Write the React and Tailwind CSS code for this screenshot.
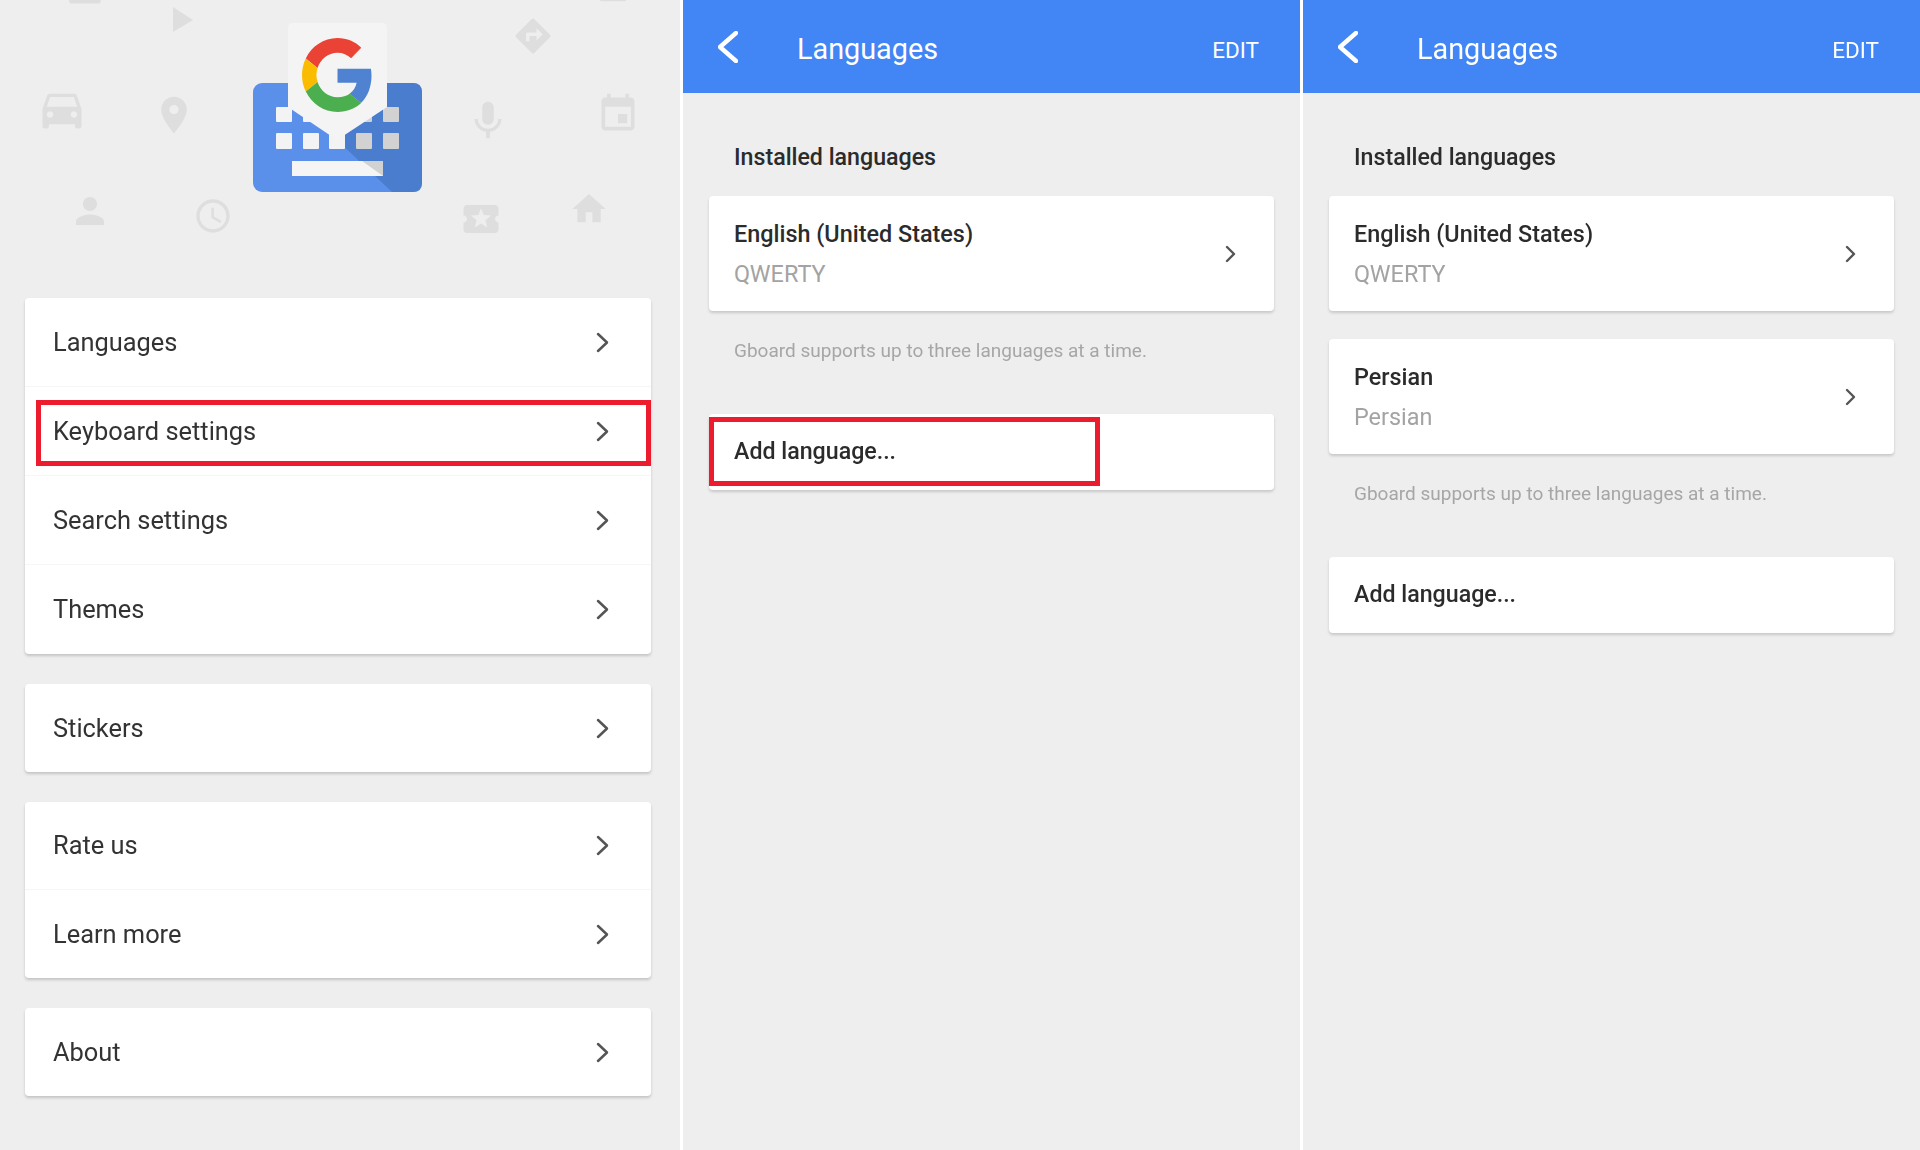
const ICONS = {
  car: 'M18.92 6.01C18.72 5.42 18.16 5 17.5 5h-11c-.66 0-1.21.42-1.42 1.01L3 12v8c0 .55.45 1 1 1h1c.55 0 1-.45 1-1v-1h12v1c0 .55.45 1 1 1h1c.55 0 1-.45 1-1v-8l-2.08-5.99zM6.5 16c-.83 0-1.5-.67-1.5-1.5S5.67 13 6.5 13s1.5.67 1.5 1.5S7.33 16 6.5 16zm11 0c-.83 0-1.5-.67-1.5-1.5s.67-1.5 1.5-1.5 1.5.67 1.5 1.5-.67 1.5-1.5 1.5zM5 11l1.5-4.5h11L19 11H5z',
  pin: 'M12 2C8.13 2 5 5.13 5 9c0 5.25 7 13 7 13s7-7.75 7-13c0-3.87-3.13-7-7-7zm0 9.5c-1.38 0-2.5-1.12-2.5-2.5s1.12-2.5 2.5-2.5 2.5 1.12 2.5 2.5-1.12 2.5-2.5 2.5z',
  mic: 'M12 14c1.66 0 2.99-1.34 2.99-3L15 5c0-1.66-1.34-3-3-3S9 3.34 9 5v6c0 1.66 1.34 3 3 3zm5.3-3c0 3-2.54 5.1-5.3 5.1S6.7 14 6.7 11H5c0 3.41 2.72 6.23 6 6.72V21h2v-3.28c3.28-.48 6-3.3 6-6.72h-1.7z',
  event: 'M17 12h-5v5h5v-5zM16 1v2H8V1H6v2H5c-1.11 0-1.99.9-1.99 2L3 19c0 1.1.89 2 2 2h14c1.1 0 2-.9 2-2V5c0-1.1-.9-2-2-2h-1V1h-2zm3 18H5V8h14v11z',
  person: 'M12 12c2.21 0 4-1.79 4-4s-1.79-4-4-4-4 1.79-4 4 1.79 4 4 4zm0 2c-2.67 0-8 1.34-8 4v2h16v-2c0-2.66-5.33-4-8-4z',
  clock: 'M11.99 2C6.47 2 2 6.48 2 12s4.47 10 9.99 10C17.52 22 22 17.52 22 12S17.52 2 11.99 2zM12 20c-4.42 0-8-3.58-8-8s3.58-8 8-8 8 3.58 8 8-3.58 8-8 8zm.5-13H11v6l5.25 3.15.75-1.23-4.5-2.67z',
  home: 'M10 20v-6h4v6h5v-8h3L12 3 2 12h3v8z',
  ticket: 'M20 12c0-1.1.9-2 2-2V6c0-1.1-.9-2-2-2H4c-1.1 0-1.99.9-1.99 2v4c1.1 0 1.99.9 1.99 2s-.89 2-2 2v4c0 1.1.9 2 2 2h16c1.1 0 2-.9 2-2v-4c-1.1 0-2-.9-2-2zm-4.42 4.8L12 14.5l-3.58 2.3 1.08-4.12-3.29-2.69 4.24-.25L12 5.8l1.54 3.95 4.24.25-3.29 2.69 1.09 4.11z',
  directions: 'M21.71 11.29l-9-9c-.39-.39-1.02-.39-1.41 0l-9 9c-.39.39-.39 1.02 0 1.41l9 9c.39.39 1.02.39 1.41 0l9-9c.39-.38.39-1.01 0-1.41zM14 14.5V12h-4v3H8v-4c0-.55.45-1 1-1h5V7.5l3.5 3.5-3.5 3.5z',
}

// faded icons behind the logo: [name, x, y, size]
const BACKDROP = [
  ['car', 36, 83, 52],
  ['pin', 152, 93, 44],
  ['mic', 465, 98, 46],
  ['event', 596, 92, 44],
  ['person', 69, 190, 42],
  ['clock', 193, 196, 40],
  ['ticket', 460, 198, 42],
  ['home', 569, 189, 40],
  ['directions', 512, 15, 42],
  ['ticket', 66, -28, 38],
  ['event', 594, -32, 38],
]

const KEY_X = [276, 303, 329, 356, 383]

function GboardArt() {
  return (
    <svg width="680" height="298" viewBox="0 0 680 298" className="block">
      <g filter="url(#soft)">
        {BACKDROP.map(([name, x, y, s], i) => (
          <svg key={i} x={x} y={y} width={s} height={s} viewBox="0 0 24 24">
            <path d={ICONS[name]} fill="#dedede" />
          </svg>
        ))}
        <polygon points="173,7 193,20 173,32" fill="#dedede" />

        {/* keyboard */}
        <rect x="253" y="83" width="169" height="109" rx="9" fill="#5a90ea" />
        <path d="M337 140 L387 107 L387 83 L413 83 Q422 83 422 92 L422 183 Q422 192 413 192 L392 192 Z" fill="#4b7dcf" />
        {KEY_X.map((x, i) => (
          <rect key={x} x={x} y="107" width="16" height="15" rx="1" fill={i > 2 ? '#d2d2d2' : '#f3f3f3'} />
        ))}
        {KEY_X.map((x, i) => (
          <rect key={x} x={x} y="133" width="16" height="16" rx="1" fill={i > 2 ? '#d2d2d2' : '#f3f3f3'} />
        ))}
        <rect x="292" y="161" width="91" height="15" fill="#f5f5f5" />
        <polygon points="362,161 383,161 383,176" fill="#d2d2d2" />

        {/* marker */}
        <path d="M293 23 H382 Q387 23 387 28 V107 L337 140 L288 107 V28 Q288 23 293 23 Z" fill="#f4f4f4" />
        <svg x="302" y="38" width="71" height="74" viewBox="0 0 48 48" preserveAspectRatio="none">
          <path fill="#ea4335" d="M24 9.5c3.54 0 6.71 1.22 9.21 3.6l6.85-6.85C35.9 2.38 30.47 0 24 0 14.62 0 6.51 5.38 2.56 13.22l7.98 6.19C12.43 13.72 17.74 9.5 24 9.5z" />
          <path fill="#4f82d0" d="M46.98 24.55c0-1.57-.15-3.09-.38-4.55H24v9.02h12.94c-.58 2.96-2.26 5.48-4.78 7.18l7.73 6c4.51-4.18 7.09-10.36 7.09-17.65z" />
          <path fill="#fbbc05" d="M10.53 28.59c-.5-1.45-.78-2.99-.78-4.59s.27-3.14.76-4.59l-7.98-6.19C.92 16.46 0 20.12 0 24c0 3.88.92 7.54 2.56 10.78l7.97-6.19z" />
          <path fill="#4caf50" d="M24 48c6.48 0 11.93-2.13 16.04-5.81l-7.73-6c-2.15 1.45-4.92 2.3-8.31 2.3-6.26 0-11.57-4.22-13.46-9.91l-7.98 6.19C6.51 42.62 14.62 48 24 48z" />
        </svg>
      </g>
      <defs>
        <filter id="soft">
          <feGaussianBlur stdDeviation="0.6" />
        </filter>
      </defs>
    </svg>
  )
}

function Chevron({ className, w = 13, h = 21, weight = 2.5, back }) {
  return (
    <svg
      width={w}
      height={h}
      viewBox={`0 0 ${w} ${h}`}
      fill="none"
      stroke="currentColor"
      strokeWidth={weight}
      strokeLinecap="round"
      strokeLinejoin="round"
      className={className}
    >
      {back ? (
        <polyline points={`${w - 2},2 2,${h / 2} ${w - 2},${h - 2}`} />
      ) : (
        <polyline points={`2,2 ${w - 2},${h / 2} 2,${h - 2}`} />
      )}
    </svg>
  )
}

function MenuRow({ label, boxed, tall }) {
  return (
    <div className={`relative flex ${tall ? 'h-[89px]' : 'h-[88px]'} items-center justify-between border-b border-[#f6f6f6] pl-7 pr-[42px] last:border-b-0`}>
      <span className="text-[25.4px] text-[#333]">{label}</span>
      <Chevron className="text-[#555]" />
      {boxed && <div className="absolute left-[11px] right-0 top-[13px] h-[66px] border-[5px] border-[#ec1c2e]" />}
    </div>
  )
}

function MenuCard({ children }) {
  return <div className="rounded-sm bg-white shadow-[0_2px_3px_rgba(0,0,0,0.18)]">{children}</div>
}

function LanguageCard({ name, layout }) {
  return (
    <div className="flex h-[115px] items-center justify-between rounded-sm bg-white pl-[25px] pr-[38px] shadow-[0_2px_3px_rgba(0,0,0,0.16)]">
      <div className="flex flex-col gap-[12px] pt-[1px]">
        <span className="text-[23.4px] leading-[28px] font-medium text-[#2b2b2b]">{name}</span>
        <span className="text-[23.4px] leading-[28px] text-[#a3a3a3]">{layout}</span>
      </div>
      <Chevron w={11} h={18} weight={2.4} className="text-[#555]" />
    </div>
  )
}

function LanguagesPanel({ languages, boxed }) {
  return (
    <div className="w-[617px] shrink-0 bg-[#eeeeee]">
      <div className="flex h-[93px] items-center bg-[#4285f4] pl-[35px] pr-[41px] text-white">
        <Chevron w={20} h={32} weight={4.4} back className="shrink-0" />
        <span className="ml-[59px] pt-[7px] text-[28.8px]">Languages</span>
        <span className="ml-auto pt-[8px] text-[22.5px]">EDIT</span>
      </div>
      <div className="px-[26px]">
        <div className="flex h-[103px] items-end pb-[25px] pl-[25px]">
          <span className="text-[23.2px] leading-[28px] font-medium text-[#2b2b2b]">Installed languages</span>
        </div>
        <div className="flex flex-col gap-[28px]">
          {languages.map(([name, layout]) => (
            <LanguageCard key={name} name={name} layout={layout} />
          ))}
        </div>
        <div className="h-[103px] pl-[25px] pt-[27px] text-[19px] leading-[26px] text-[#a6a6a6]">
          Gboard supports up to three languages at a time.
        </div>
        <div className="relative flex h-[76px] items-center rounded-sm bg-white pb-[2px] pl-[25px] shadow-[0_2px_3px_rgba(0,0,0,0.16)]">
          <span className="text-[23.2px] font-medium text-[#2b2b2b]">Add language...</span>
          {boxed && <div className="absolute left-0 top-[3px] h-[69px] w-[391px] border-[5px] border-[#ec1c2e]" />}
        </div>
      </div>
    </div>
  )
}

export default function App() {
  return (
    <div className="flex h-[1150px] gap-[3px] overflow-hidden bg-white font-['Roboto',sans-serif]">
      <div className="w-[680px] shrink-0 bg-[#eeeeee]">
        <GboardArt />
        <div className="flex flex-col gap-[30px] pl-[25px] pr-[29px]">
          <MenuCard>
            <MenuRow label="Languages" tall />
            <MenuRow label="Keyboard settings" tall boxed />
            <MenuRow label="Search settings" tall />
            <MenuRow label="Themes" tall />
          </MenuCard>
          <MenuCard>
            <MenuRow label="Stickers" />
          </MenuCard>
          <MenuCard>
            <MenuRow label="Rate us" />
            <MenuRow label="Learn more" />
          </MenuCard>
          <MenuCard>
            <MenuRow label="About" />
          </MenuCard>
        </div>
      </div>
      <LanguagesPanel languages={[['English (United States)', 'QWERTY']]} boxed />
      <LanguagesPanel languages={[['English (United States)', 'QWERTY'], ['Persian', 'Persian']]} />
    </div>
  )
}
